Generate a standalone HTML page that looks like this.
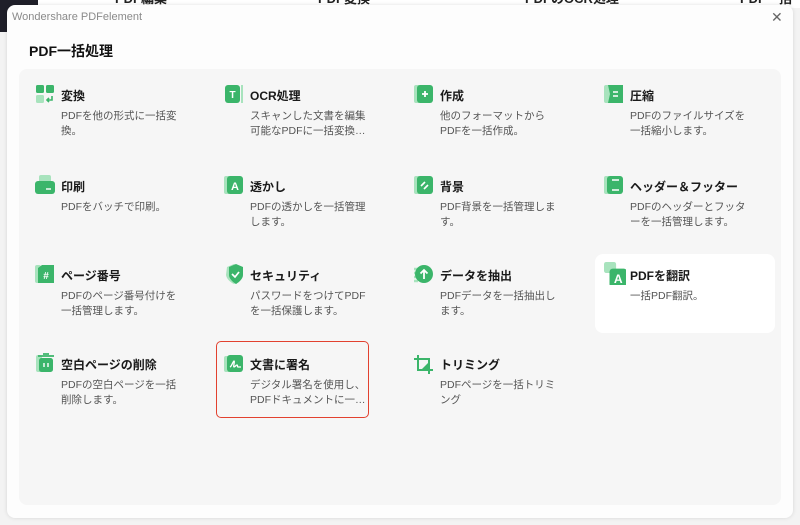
<!DOCTYPE html>
<html><head><meta charset="utf-8"><style>
*{margin:0;padding:0;box-sizing:border-box}
body{width:800px;height:525px;overflow:hidden;background:#f3f3f3;font-family:"Liberation Sans","Noto Sans CJK JP",sans-serif;position:relative}
.bgtop{position:absolute;left:0;top:0;width:800px;height:8px;background:#fff}
.dark{position:absolute;left:0;top:0;width:38px;height:32px;background:#1f1f29;border-radius:0 0 10px 0}
.bgt{position:absolute;top:-12px;font-size:13px;font-weight:bold;color:#222}
.dlg{position:absolute;left:7px;top:5px;width:786px;height:513px;background:#fdfdfd;border-radius:8px;box-shadow:0 0 4px rgba(0,0,0,.12)}
.ttl{position:absolute;left:5px;top:6px;font-size:11px;color:#8a8a8a}
.x{position:absolute;left:764px;top:4px;font-size:14px;color:#666}
.h{position:absolute;left:22px;top:36px;font-size:14px;font-weight:bold;color:#111}
.panel{position:absolute;left:12px;top:64px;width:762px;height:436px;background:#f6f6f6;border-radius:8px}
.it{position:absolute;width:170px}
.it .t{position:absolute;left:0;top:0;font-size:12px;font-weight:bold;color:#1a1a1a;white-space:nowrap}
.it .d{position:absolute;left:0;top:22px;font-size:10.5px;line-height:15px;color:#555;width:125px}
.ic{position:absolute;left:-26px;top:-3px;width:20px;height:20px}
.hl{position:absolute;left:576px;top:185px;width:180px;height:79px;background:#fff;border-radius:8px}
.red{position:absolute;left:197px;top:272px;width:153px;height:77px;border:1.5px solid #e2412f;border-radius:5px}
</style></head><body>
<div class="bgtop"></div>
<div class="dark"></div>
<div class="bgt" style="left:115px">PDF編集</div>
<div class="bgt" style="left:318px">PDF変換</div>
<div class="bgt" style="left:525px">PDFのOCR処理</div>
<div class="bgt" style="left:740px">PDF一括処</div>
<div class="dlg">
<div class="ttl">Wondershare PDFelement</div>
<div class="x">✕</div>
<div class="h">PDF一括処理</div>
<div class="panel">
<div class="hl"></div>
<div class="red"></div>
</div>
</div>
<!-- row1 -->
<div class="it" style="left:61px;top:87px"><svg class="ic" viewBox="0 0 20 20"><rect x="1" y="1" width="8" height="8" rx="1.5" fill="#3bb56a"/><rect x="11" y="1" width="8" height="8" rx="1.5" fill="#3bb56a"/><rect x="1" y="11" width="8" height="8" rx="1.5" fill="#a8e3bd"/><path d="M17 12v4h-5m2-2l-2 2 2 2" stroke="#3bb56a" stroke-width="1.6" fill="none"/></svg><div class="t">変換</div><div class="d">PDFを他の形式に一括変換。</div></div>
<div class="it" style="left:250px;top:87px"><svg class="ic" viewBox="0 0 20 20"><rect x="1" y="1" width="15" height="18" rx="3" fill="#3bb56a"/><rect x="17" y="1" width="2" height="18" fill="#a8e3bd"/><text x="8.5" y="14" font-size="10" font-weight="bold" fill="#fff" text-anchor="middle" font-family="Liberation Sans">T</text></svg><div class="t">OCR処理</div><div class="d">スキャンした文書を編集可能なPDFに一括変換…</div></div>
<div class="it" style="left:440px;top:87px"><svg class="ic" viewBox="0 0 20 20"><rect x="0" y="1" width="6" height="18" rx="2" fill="#a8e3bd"/><rect x="3" y="1" width="16" height="18" rx="3" fill="#3bb56a"/><path d="M11 7v6M8 10h6" stroke="#fff" stroke-width="1.8"/></svg><div class="t">作成</div><div class="d">他のフォーマットからPDFを一括作成。</div></div>
<div class="it" style="left:630px;top:87px"><svg class="ic" viewBox="0 0 20 20"><rect x="0" y="1" width="6" height="18" rx="2" fill="#a8e3bd"/><path d="M4 1h15v18H4l2-9z" fill="#3bb56a"/><path d="M9 8h5M9 12h5" stroke="#fff" stroke-width="1.6"/></svg><div class="t">圧縮</div><div class="d">PDFのファイルサイズを一括縮小します。</div></div>
<!-- row2 -->
<div class="it" style="left:61px;top:178px"><svg class="ic" viewBox="0 0 20 20"><rect x="4" y="0" width="12" height="8" rx="2" fill="#a8e3bd"/><rect x="0" y="6" width="20" height="13" rx="3" fill="#3bb56a"/><path d="M11 14h5" stroke="#fff" stroke-width="1.4"/></svg><div class="t">印刷</div><div class="d">PDFをバッチで印刷。</div></div>
<div class="it" style="left:250px;top:178px"><svg class="ic" viewBox="0 0 20 20"><rect x="0" y="1" width="6" height="18" rx="2" fill="#a8e3bd"/><rect x="3" y="1" width="16" height="18" rx="3" fill="#3bb56a"/><text x="11" y="15" font-size="11" font-weight="bold" fill="#fff" text-anchor="middle" font-family="Liberation Sans">A</text></svg><div class="t">透かし</div><div class="d">PDFの透かしを一括管理します。</div></div>
<div class="it" style="left:440px;top:178px"><svg class="ic" viewBox="0 0 20 20"><rect x="0" y="1" width="6" height="18" rx="2" fill="#a8e3bd"/><rect x="3" y="1" width="16" height="18" rx="3" fill="#3bb56a"/><path d="M7 11l4-4M10 14l4-4" stroke="#fff" stroke-width="1.6"/></svg><div class="t">背景</div><div class="d">PDF背景を一括管理します。</div></div>
<div class="it" style="left:630px;top:178px"><svg class="ic" viewBox="0 0 20 20"><rect x="0" y="1" width="6" height="18" rx="2" fill="#a8e3bd"/><rect x="3" y="1" width="16" height="18" rx="3" fill="#3bb56a"/><path d="M8 5h7M8 15h7" stroke="#fff" stroke-width="1.6"/></svg><div class="t">ヘッダー＆フッター</div><div class="d">PDFのヘッダーとフッターを一括管理します。</div></div>
<!-- row3 -->
<div class="it" style="left:61px;top:267px"><svg class="ic" viewBox="0 0 20 20"><rect x="0" y="1" width="6" height="18" rx="2" fill="#a8e3bd"/><path d="M3 4l4-3h12v18H3z" fill="#3bb56a"/><text x="11" y="15" font-size="10" font-weight="bold" fill="#fff" text-anchor="middle" font-family="Liberation Sans">#</text></svg><div class="t">ページ番号</div><div class="d">PDFのページ番号付けを一括管理します。</div></div>
<div class="it" style="left:250px;top:267px"><svg class="ic" viewBox="0 0 20 20"><path d="M3 3l7-3 8 3v8c0 5-8 9-8 9s-7-3-8-9z" fill="#a8e3bd"/><path d="M5 3l7-3 7 3v8c0 5-7 9-7 9s-7-4-7-9z" fill="#3bb56a"/><path d="M8 10l3 3 4-5" stroke="#fff" stroke-width="1.7" fill="none"/></svg><div class="t">セキュリティ</div><div class="d">パスワードをつけてPDFを一括保護します。</div></div>
<div class="it" style="left:440px;top:267px"><svg class="ic" viewBox="0 0 20 20"><path d="M-4 5h8M-4 9h6M-4 13h6M-4 17h8" stroke="#a8e3bd" stroke-width="2.4"/><circle cx="10" cy="10" r="9" fill="#3bb56a"/><path d="M10 15V6M6.5 9.5L10 6l3.5 3.5" stroke="#fff" stroke-width="1.8" fill="none"/></svg><div class="t">データを抽出</div><div class="d">PDFデータを一括抽出します。</div></div>
<div class="it" style="left:630px;top:267px"><svg class="ic" viewBox="0 0 20 20" style="top:-6px;width:22px;height:24px"><rect x="0" y="0" width="11" height="10" rx="2" fill="#a8e3bd"/><rect x="5" y="6" width="16" height="17" rx="3" fill="#3bb56a"/><text x="13" y="19" font-size="11" font-weight="bold" fill="#fff" text-anchor="middle" font-family="Liberation Sans">A</text></svg><div class="t">PDFを翻訳</div><div class="d">一括PDF翻訳。</div></div>
<!-- row4 -->
<div class="it" style="left:61px;top:356px"><svg class="ic" viewBox="0 0 20 20"><rect x="1" y="2" width="6" height="17" rx="2" fill="#a8e3bd"/><path d="M3 3h16M8 1h6" stroke="#3bb56a" stroke-width="1.8"/><rect x="4" y="5" width="14" height="14" rx="2.5" fill="#3bb56a"/><path d="M9 10v4M13 10v4" stroke="#fff" stroke-width="1.4"/></svg><div class="t">空白ページの削除</div><div class="d">PDFの空白ページを一括削除します。</div></div>
<div class="it" style="left:250px;top:356px"><svg class="ic" viewBox="0 0 20 20"><rect x="0" y="3" width="6" height="16" rx="2" fill="#a8e3bd"/><rect x="3" y="2" width="16" height="17" rx="3" fill="#3bb56a"/><path d="M6 14c2-1 3-6 4-6s-1 6 0 6 2-2 3-2 0 2 1 2h3" stroke="#fff" stroke-width="1.3" fill="none"/></svg><div class="t">文書に署名</div><div class="d">デジタル署名を使用し、PDFドキュメントに一…</div></div>
<div class="it" style="left:440px;top:356px"><svg class="ic" viewBox="0 0 20 20" style="top:-1px"><path d="M4 0v15h15M0 4h15v15" stroke="#3bb56a" stroke-width="2" fill="none"/><path d="M14 8v6H8z" fill="#3bb56a"/></svg><div class="t">トリミング</div><div class="d">PDFページを一括トリミング</div></div>
</body></html>
